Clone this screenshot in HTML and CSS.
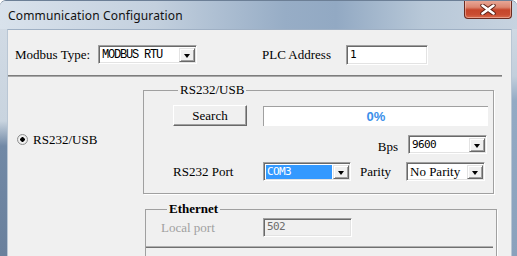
FILE: index.html
```html
<!DOCTYPE html>
<html lang="en">
<head>
    <meta charset="UTF-8">
    <title>Communication Configuration</title>
    <link rel="stylesheet" href="styles.css">
</head>
<body>
    <div class="window">
        <div class="titlebar">
            <span class="title">Communication Configuration</span>
            <button class="close">
                <svg width="16" height="11" viewBox="0 0 16 11">
                    <path d="M2.5 1.5 L13.5 9.5 M13.5 1.5 L2.5 9.5" stroke="#5a1e14" stroke-width="4.4" stroke-linecap="round"/>
                    <path d="M2.5 1.5 L13.5 9.5 M13.5 1.5 L2.5 9.5" stroke="#ffffff" stroke-width="2.6" stroke-linecap="round"/>
                </svg>
            </button>
        </div>

        <div class="client">
            <div class="top-panel">
                <span class="label type-label">Modbus Type:</span>
                <div class="combo combo-modbus">
                    <span class="combo-text mono">MODBUS RTU</span>
                    <span class="drop"></span>
                </div>
                <span class="label plc-label">PLC Address</span>
                <div class="edit plc-edit">1</div>
            </div>

            <div class="separator"></div>

            <div class="main">
                <div class="serial-row">
                    <div class="radio-col">
                        <span class="radio"></span>
                        <span class="label">RS232/USB</span>
                    </div>

                    <fieldset class="group serial-group">
                        <legend>RS232/USB</legend>
                        <div class="row row-search">
                            <button class="btn">Search</button>
                            <div class="progress">0%</div>
                        </div>
                        <div class="row row-bps">
                            <span class="label bps-label">Bps</span>
                            <div class="combo combo-small">
                                <span class="combo-text value">9600</span>
                                <span class="drop"></span>
                            </div>
                        </div>
                        <div class="row row-port">
                            <span class="label port-label">RS232 Port</span>
                            <div class="combo combo-port">
                                <span class="combo-text value selected">COM3</span>
                                <span class="drop"></span>
                            </div>
                            <span class="label parity-label">Parity</span>
                            <div class="combo combo-small">
                                <span class="combo-text">No Parity</span>
                                <span class="drop"></span>
                            </div>
                        </div>
                    </fieldset>
                </div>

                <fieldset class="group eth-group">
                    <legend>Ethernet</legend>
                    <div class="row row-local">
                        <span class="label disabled">Local port</span>
                        <div class="edit edit-disabled value">502</div>
                    </div>
                    <div class="inner-line"></div>
                </fieldset>
            </div>
        </div>
    </div>
</body>
</html>
```

FILE: styles.css
```css
:root {
    --face: #f0f0f0;
    --shadow: #a0a0a0;
    --dark: #696969;
    --light: #e3e3e3;
    --blue: #3399ff;
    --dlg: "Liberation Serif", "Times New Roman", serif;
}

* {
    margin: 0;
    padding: 0;
    box-sizing: border-box;
}

body {
    width: 517px;
    height: 256px;
    overflow: hidden;
    font-family: var(--dlg);
    font-size: 13px;
    color: #000;
}

.window {
    height: 256px;
    overflow: hidden;
    border-radius: 6px 6px 0 0;
    border-top: 1px solid #6c7f96;
    background:
        linear-gradient(to bottom, #d3dce6 0, #c9d4df 120px, #7189a6 145px, #6a809c 100%) left / 7px 100% no-repeat,
        linear-gradient(to bottom, #d6dee7 0, #c2cfdc 75px, #93aac4 100px, #8aa1bc 100%) right / 6px 100% no-repeat,
        #c9d4df;
}

/* Title bar */
.titlebar {
    height: 28px;
    display: flex;
    align-items: flex-start;
    justify-content: space-between;
    border-radius: 5px 5px 0 0;
    background: linear-gradient(to right, #d9e2ec 0, #c3d0de 30%, #97adc6 55%, #92a9c3 65%, #b8c8d8 82%, #c7d3e0 100%);
}

.title {
    font-family: "Noto Sans", sans-serif;
    font-size: 12px;
    letter-spacing: 0.15px;
    margin: 6px 0 0 8px;
    color: #111;
}

.close {
    width: 48px;
    height: 19px;
    margin-top: -1px;
    margin-right: 5px;
    border: 1px solid #6b2b20;
    border-top: none;
    border-radius: 0 0 4px 4px;
    background: linear-gradient(to bottom, #e9ab9b 0, #dc8670 40%, #c6462b 55%, #c94c31 80%, #d86a4c 100%);
    box-shadow: inset 0 0 0 1px rgba(255, 220, 210, 0.45);
    display: flex;
    align-items: center;
    justify-content: center;
}

/* Client area */
.client {
    height: 228px;
    margin: 0 5px 0 7px;
    background: var(--face);
    border-top: 1px solid #9fb0c4;
    border-left: 1px solid #b9c6d4;
    border-right: 1px solid #b9c6d4;
}

.top-panel {
    height: 45px;
    display: flex;
    align-items: center;
    padding: 4px 0 0 7px;
}

.label {
    white-space: pre;
    line-height: 14px;
}

.mono {
    font-family: "Liberation Mono", monospace;
    font-size: 12px;
    letter-spacing: -1.2px;
}

.value {
    font-family: "DejaVu Sans Mono", monospace;
    font-size: 11px;
    letter-spacing: -0.6px;
}

.type-label {
    width: 83px;
}

.combo {
    height: 19px;
    display: flex;
    align-items: stretch;
    background: #fff;
    border-top: 1px solid var(--shadow);
    border-left: 1px solid var(--shadow);
    border-right: 1px solid #fff;
    border-bottom: 1px solid #fff;
    box-shadow: inset 1px 1px 0 var(--dark), inset -1px -1px 0 var(--light);
    padding: 2px 1px 1px 2px;
}

.combo-text {
    flex: 1;
    padding-left: 1px;
    line-height: 14px;
    white-space: pre;
    overflow: hidden;
}

.combo-text.selected {
    background: var(--blue);
    color: #fff;
    margin-right: 1px;
}

.drop {
    width: 16px;
    position: relative;
    background: var(--face);
    border-top: 1px solid var(--light);
    border-left: 1px solid var(--light);
    border-right: 1px solid var(--dark);
    border-bottom: 1px solid var(--dark);
    box-shadow: inset 1px 1px 0 #fff, inset -1px -1px 0 var(--shadow);
}

.drop::after {
    content: "";
    position: absolute;
    left: 4px;
    top: 5px;
    border-left: 3.5px solid transparent;
    border-right: 3.5px solid transparent;
    border-top: 4px solid #000;
}

.combo-modbus {
    width: 99px;
}

.plc-label {
    width: 84px;
    margin-left: 65px;
}

.edit {
    height: 20px;
    line-height: 16px;
    padding-left: 3px;
    background: #fff;
    border-top: 1px solid var(--shadow);
    border-left: 1px solid var(--shadow);
    border-right: 1px solid #fff;
    border-bottom: 1px solid #fff;
    box-shadow: inset 1px 1px 0 var(--dark), inset -1px -1px 0 var(--light);
}

.plc-edit {
    width: 82px;
    font-family: "DejaVu Sans Mono", monospace;
    font-size: 11px;
    padding-top: 1px;
}

.separator {
    height: 2px;
    width: 494px;
    border-top: 1px solid #7d7d7d;
    border-bottom: 1px solid #a8a8a8;
}

/* Main area */
.main {
    padding-top: 6px;
}

.serial-row {
    display: flex;
    align-items: center;
}

.radio-col {
    width: 135px;
    display: flex;
    align-items: center;
    padding-left: 9px;
    padding-top: 2px;
}

.radio {
    width: 11px;
    height: 11px;
    border-radius: 50%;
    border: 1px solid #8e8f8f;
    background: radial-gradient(circle, #000 0 2px, #f4f4f4 2.5px, #dcdcdc 100%);
    margin-right: 5px;
}

.group {
    border: 1px solid var(--shadow);
    box-shadow: 1px 1px 0 #fff;
}

.group legend {
    line-height: 14px;
    padding: 0 2px;
}

.serial-group {
    width: 351px;
    padding: 8px 0 12px 29px;
}

.serial-group legend {
    margin-left: 5px;
}

.row {
    display: flex;
    align-items: center;
}

.btn {
    width: 74px;
    height: 21px;
    font-family: var(--dlg);
    font-size: 13px;
    background: var(--face);
    border-top: 1px solid #fff;
    border-left: 1px solid #fff;
    border-right: 1px solid var(--dark);
    border-bottom: 1px solid var(--dark);
    box-shadow: inset -1px -1px 0 var(--shadow);
    padding-top: 1px;
}

.progress {
    width: 225px;
    height: 20px;
    margin-left: 16px;
    background: #fff;
    border-top: 1px solid var(--shadow);
    border-left: 1px solid var(--shadow);
    font-family: "Liberation Sans", sans-serif;
    font-weight: bold;
    font-size: 13px;
    color: #3b8fea;
    text-align: center;
    line-height: 19px;
}

.row-bps {
    justify-content: flex-end;
    margin-top: 9px;
    padding-right: 6px;
}

.bps-label {
    margin-right: 10px;
    padding-top: 4px;
}

.combo-small {
    width: 79px;
}

.row-port {
    margin-top: 8px;
}

.port-label {
    width: 90px;
    padding-top: 1px;
}

.combo-port {
    width: 88px;
}

.parity-label {
    width: 46px;
    margin-left: 9px;
    padding-top: 1px;
}

.eth-group {
    width: 352px;
    height: 80px;
    margin: 8px 0 0 137px;
    padding: 2px 0 0 15px;
}

.eth-group legend {
    margin-left: 6px;
    font-weight: bold;
}

.disabled {
    color: #a0a0a0;
    width: 102px;
}

.edit-disabled {
    width: 89px;
    height: 19px;
    line-height: 16px;
    background: var(--face);
    color: #6d6d6d;
    box-shadow: inset 1px 1px 0 var(--dark), inset -1px -1px 0 var(--light);
}

.inner-line {
    height: 2px;
    margin: 9px 3px 0 -15px;
    border-top: 1px solid #b0b0b0;
    border-bottom: 1px solid #707070;
}
```
